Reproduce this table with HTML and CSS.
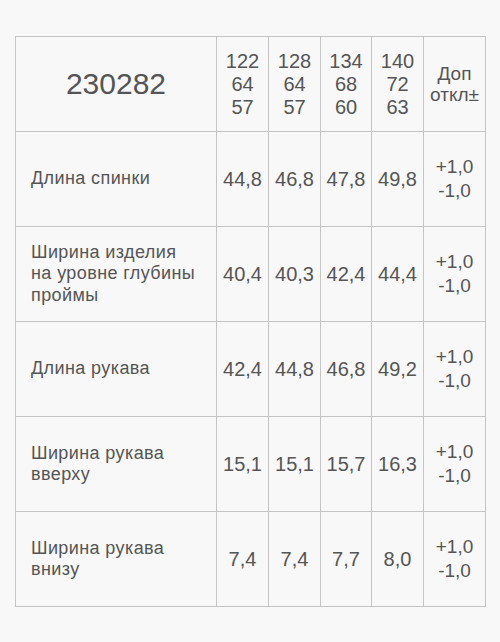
FILE: index.html
```html
<!DOCTYPE html>
<html lang="ru">
<head>
<meta charset="utf-8">
<title>230282</title>
<link rel="stylesheet" href="styles.css">
</head>
<body>
<table class="sizes">
  <colgroup>
    <col class="c-label">
    <col class="c-size">
    <col class="c-size">
    <col class="c-size2">
    <col class="c-size">
    <col class="c-tol">
  </colgroup>
  <tr>
    <td class="model">230282</td>
    <td class="head">122<br>64<br>57</td>
    <td class="head">128<br>64<br>57</td>
    <td class="head">134<br>68<br>60</td>
    <td class="head">140<br>72<br>63</td>
    <td class="tol tol-head">Доп<br>откл±</td>
  </tr>
  <tr>
    <td class="label">Длина спинки</td>
    <td class="val">44,8</td>
    <td class="val">46,8</td>
    <td class="val">47,8</td>
    <td class="val">49,8</td>
    <td class="tol">+1,0<br>-1,0</td>
  </tr>
  <tr>
    <td class="label">Ширина изделия<br>на уровне глубины<br>проймы</td>
    <td class="val">40,4</td>
    <td class="val">40,3</td>
    <td class="val">42,4</td>
    <td class="val">44,4</td>
    <td class="tol">+1,0<br>-1,0</td>
  </tr>
  <tr>
    <td class="label">Длина рукава</td>
    <td class="val">42,4</td>
    <td class="val">44,8</td>
    <td class="val">46,8</td>
    <td class="val">49,2</td>
    <td class="tol">+1,0<br>-1,0</td>
  </tr>
  <tr>
    <td class="label">Ширина рукава<br>вверху</td>
    <td class="val">15,1</td>
    <td class="val">15,1</td>
    <td class="val">15,7</td>
    <td class="val">16,3</td>
    <td class="tol">+1,0<br>-1,0</td>
  </tr>
  <tr>
    <td class="label">Ширина рукава<br>внизу</td>
    <td class="val">7,4</td>
    <td class="val">7,4</td>
    <td class="val">7,7</td>
    <td class="val">8,0</td>
    <td class="tol">+1,0<br>-1,0</td>
  </tr>
</table>
</body>
</html>
```
FILE: styles.css
```css
html, body {
  margin: 0;
  padding: 0;
  background: #f8f8f8;
}
body {
  padding: 36px 0 0 15px;
  font-family: "Liberation Sans", Arial, sans-serif;
  color: #555555;
}
.sizes {
  border-collapse: collapse;
  table-layout: fixed;
  width: 471px;
}
.c-label { width: 201px; }
.c-size { width: 52px; }
.c-size2 { width: 51px; }
.c-tol { width: 62px; }
.sizes td {
  border: 1px solid #c4c4c4;
  height: 94px;
  padding: 0;
  vertical-align: middle;
  text-align: center;
}
.model {
  font-size: 30px;
}
.head {
  font-size: 20px;
  line-height: 23px;
}
.val {
  font-size: 20px;
}
.tol {
  font-size: 19px;
  line-height: 24px;
}
.tol-head {
  line-height: 21px;
}
.sizes td.label {
  text-align: left;
  padding-left: 15px;
  font-size: 18px;
  line-height: 21.5px;
  letter-spacing: 0.4px;
}
```
